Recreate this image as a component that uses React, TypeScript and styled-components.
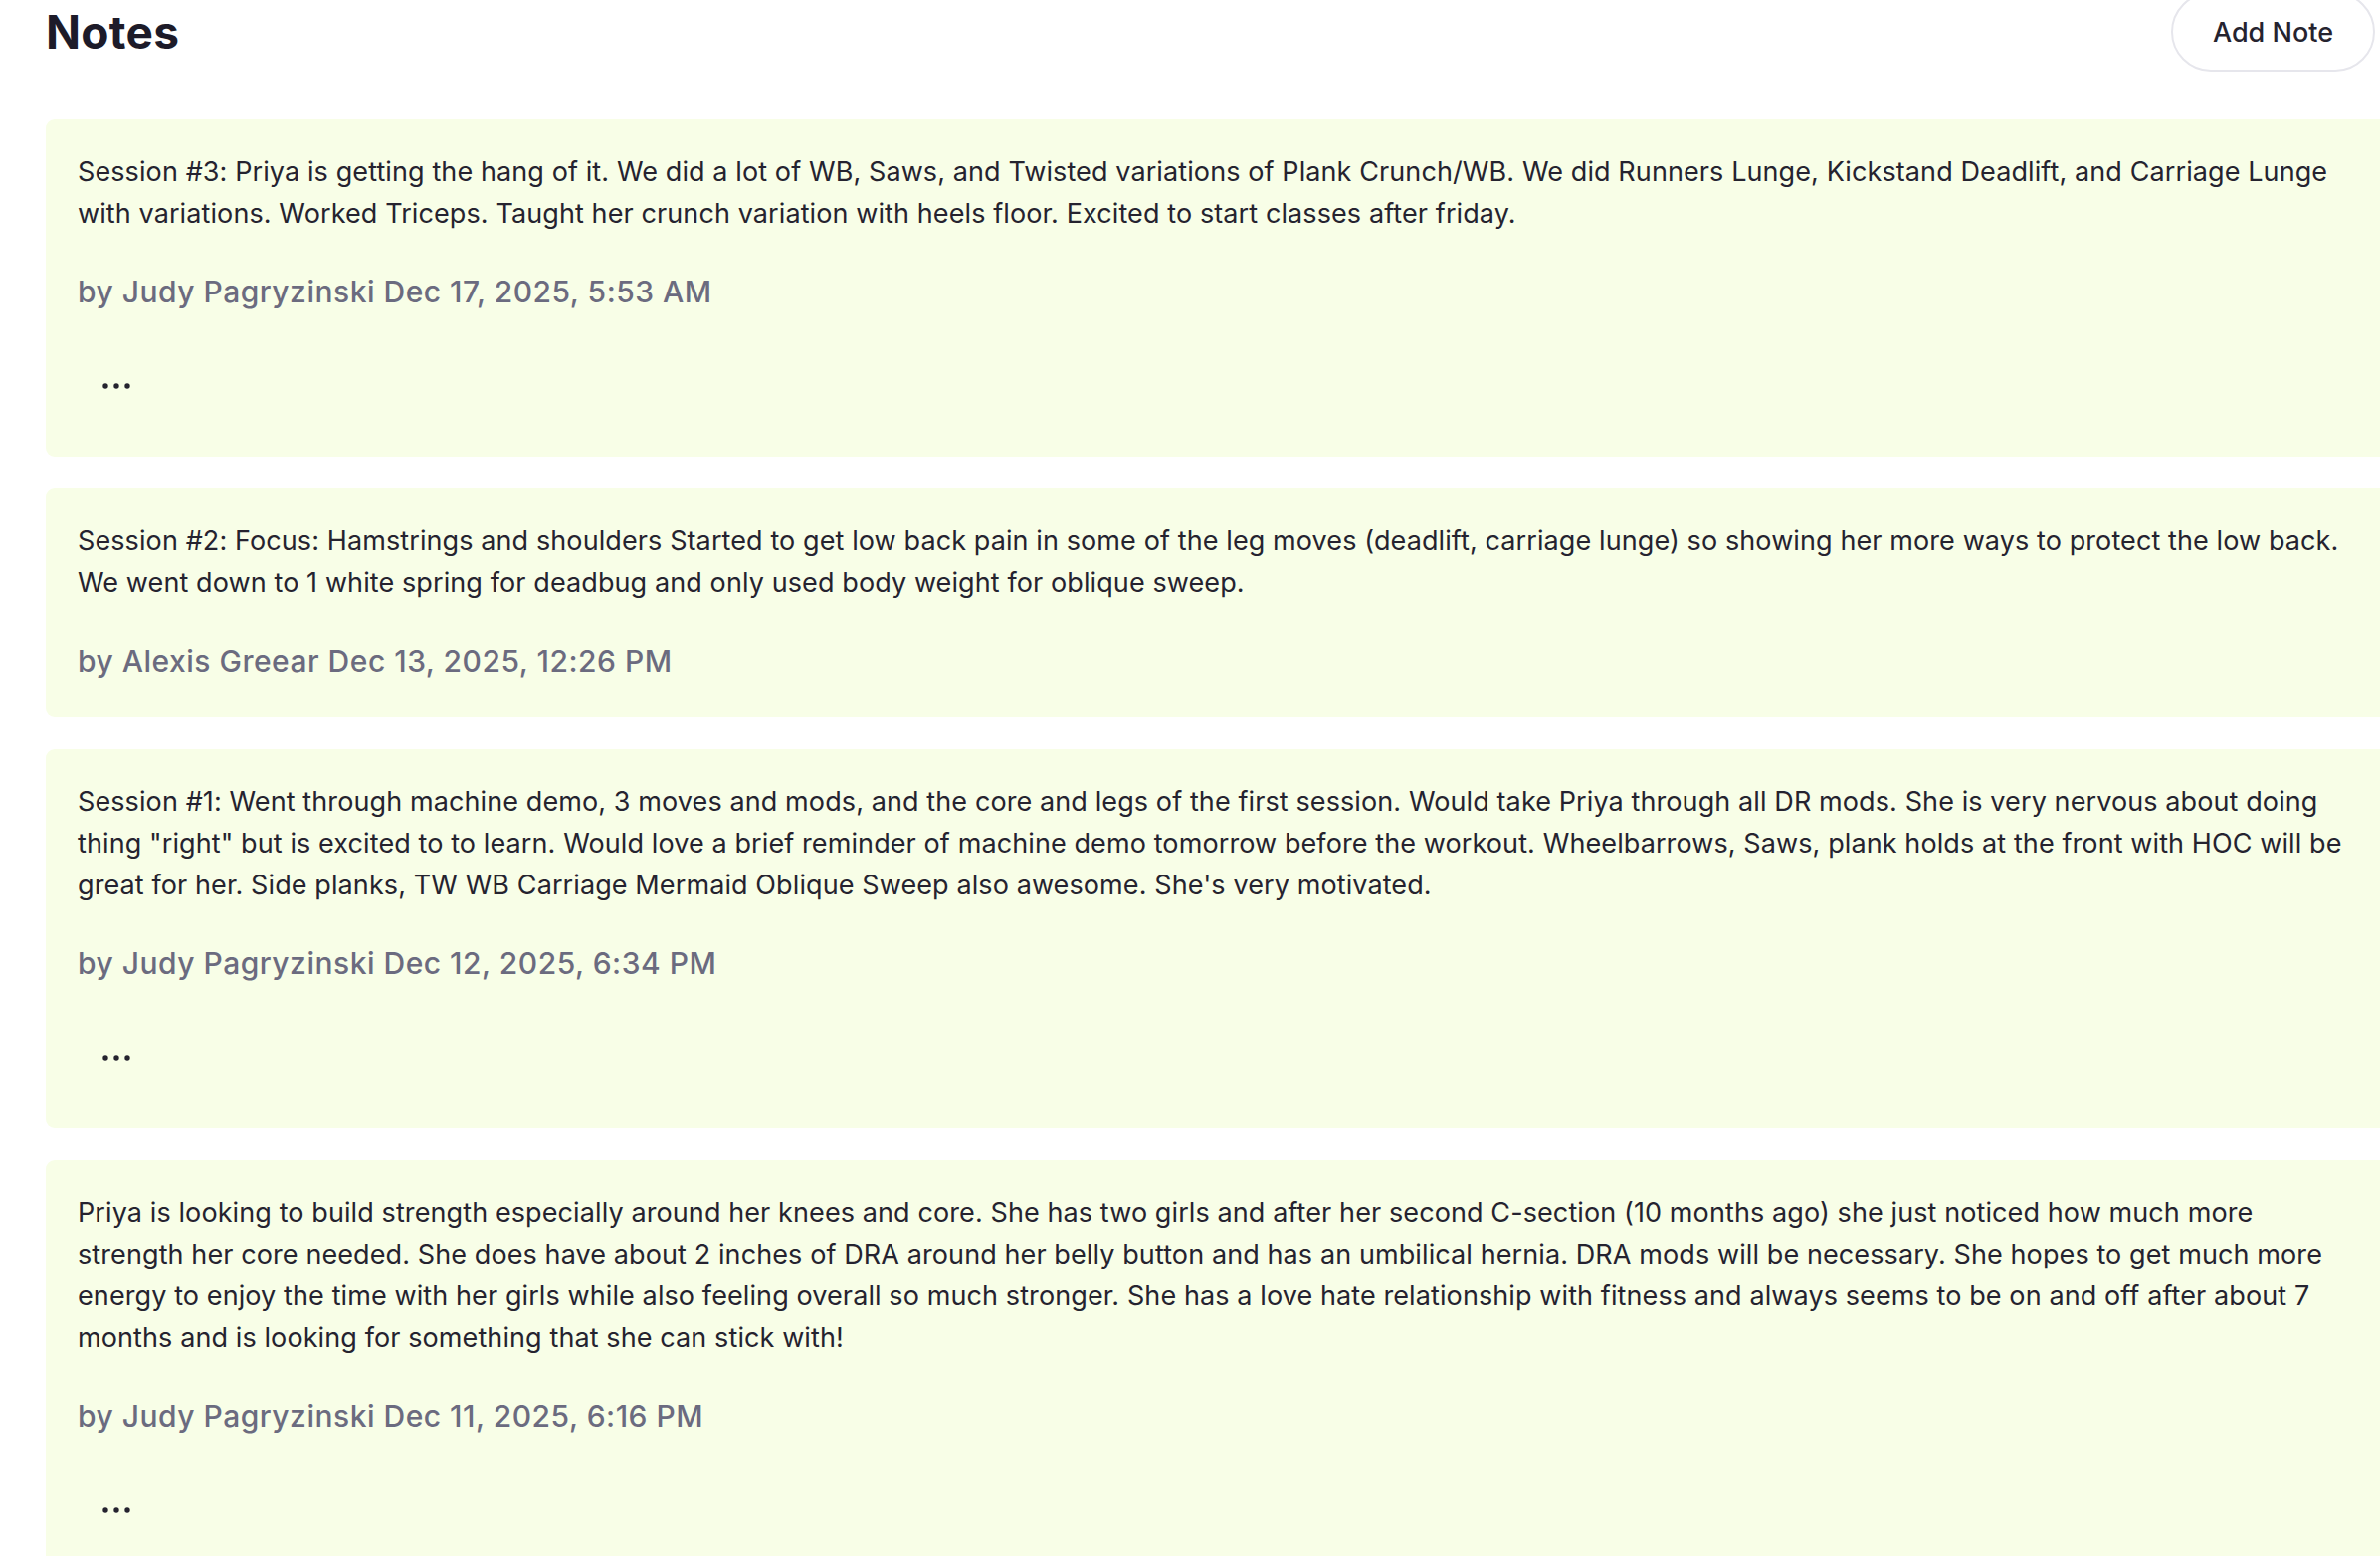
import React from "react";
import styled, { createGlobalStyle } from "styled-components";

const GlobalStyle = createGlobalStyle`
  html, body {
    margin: 0;
    padding: 0;
    background: #ffffff;
    overflow: hidden;
  }
  body {
    font-family: Inter, "Noto Sans", "Liberation Sans", sans-serif;
    color: #25232f;
    -webkit-font-smoothing: antialiased;
  }
  * { box-sizing: border-box; }
`;

const Page = styled.div`
  width: 2400px;
  padding: 0 0 0 46px;
`;

const Header = styled.header`
  display: flex;
  align-items: center;
  justify-content: space-between;
  height: 80px;
  margin-top: -8px;
  margin-right: 13px;
`;

const Title = styled.h1`
  margin: 0;
  font-size: 46px;
  line-height: 54px;
  font-weight: 700;
  color: #1d1b29;
  letter-spacing: 0.3px;
`;

const AddButton = styled.button`
  height: 80px;
  padding: 0 40px;
  border: 2px solid #e6e6ec;
  border-radius: 999px;
  background: #ffffff;
  font-family: inherit;
  font-size: 27px;
  font-weight: 500;
  color: #25232f;
  cursor: pointer;
`;

const List = styled.div`
  display: flex;
  flex-direction: column;
  gap: 32px;
  margin-top: 48px;
`;

const Card = styled.article`
  background: #f8fee7;
  border-radius: 9px;
  padding: 32px 32px 34px;
  display: flex;
  flex-direction: column;
  align-items: flex-start;
`;

const Body = styled.p`
  margin: 0;
  font-size: 27px;
  line-height: 42px;
  font-weight: 400;
  letter-spacing: 0.1px;
  color: #25232f;
`;

const Meta = styled.div`
  margin-top: 34px;
  font-size: 30px;
  line-height: 46px;
  font-weight: 500;
  letter-spacing: 0.5px;
  color: #6b6b7f;
`;

const MoreButton = styled.button`
  margin-top: 19px;
  padding: 24px;
  border: none;
  background: transparent;
  display: flex;
  align-items: flex-start;
  cursor: pointer;
`;

const Dots = () => (
  <svg width="32" height="42" viewBox="0 0 32 42" aria-hidden="true">
    <circle cx="4" cy="29" r="2.7" fill="#25232f" />
    <circle cx="15" cy="29" r="2.7" fill="#25232f" />
    <circle cx="26" cy="29" r="2.7" fill="#25232f" />
  </svg>
);

type Note = {
  text: string;
  author: string;
  date: string;
  menu: boolean;
};

const notes: Note[] = [
  {
    text:
      "Session #3: Priya is getting the hang of it. We did a lot of WB, Saws, and Twisted variations of Plank Crunch/WB. We did Runners Lunge, Kickstand Deadlift, and Carriage Lunge with variations. Worked Triceps. Taught her crunch variation with heels floor. Excited to start classes after friday.",
    author: "Judy Pagryzinski",
    date: "Dec 17, 2025, 5:53 AM",
    menu: true,
  },
  {
    text:
      "Session #2: Focus: Hamstrings and shoulders Started to get low back pain in some of the leg moves (deadlift, carriage lunge) so showing her more ways to protect the low back. We went down to 1 white spring for deadbug and only used body weight for oblique sweep.",
    author: "Alexis Greear",
    date: "Dec 13, 2025, 12:26 PM",
    menu: false,
  },
  {
    text:
      "Session #1: Went through machine demo, 3 moves and mods, and the core and legs of the first session. Would take Priya through all DR mods. She is very nervous about doing thing \"right\" but is excited to to learn. Would love a brief reminder of machine demo tomorrow before the workout. Wheelbarrows, Saws, plank holds at the front with HOC will be great for her. Side planks, TW WB Carriage Mermaid Oblique Sweep also awesome. She's very motivated.",
    author: "Judy Pagryzinski",
    date: "Dec 12, 2025, 6:34 PM",
    menu: true,
  },
  {
    text:
      "Priya is looking to build strength especially around her knees and core. She has two girls and after her second C-section (10 months ago) she just noticed how much more strength her core needed. She does have about 2 inches of DRA around her belly button and has an umbilical hernia. DRA mods will be necessary. She hopes to get much more energy to enjoy the time with her girls while also feeling overall so much stronger. She has a love hate relationship with fitness and always seems to be on and off after about 7 months and is looking for something that she can stick with!",
    author: "Judy Pagryzinski",
    date: "Dec 11, 2025, 6:16 PM",
    menu: true,
  },
];

export default function App() {
  return (
    <>
      <GlobalStyle />
      <Page>
        <Header>
          <Title>Notes</Title>
          <AddButton>Add Note</AddButton>
        </Header>
        <List>
          {notes.map((n, i) => (
            <Card key={i}>
              <Body>{n.text}</Body>
              <Meta>
                by {n.author} {n.date}
              </Meta>
              {n.menu && (
                <MoreButton aria-label="More options">
                  <Dots />
                </MoreButton>
              )}
            </Card>
          ))}
        </List>
      </Page>
    </>
  );
}
